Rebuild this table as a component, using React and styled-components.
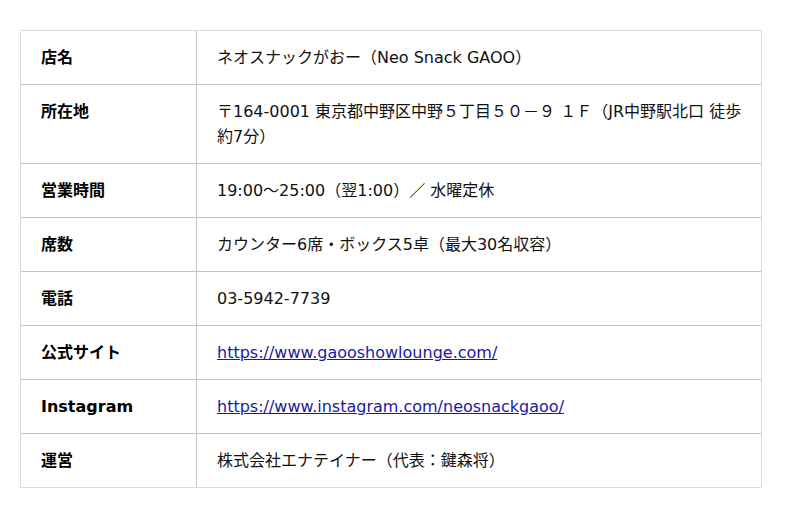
import React from "react";
import styled, { createGlobalStyle } from "styled-components";

const rows = [
  { label: "店名", value: "ネオスナックがおー（Neo Snack GAOO）" },
  {
    label: "所在地",
    value: "〒164-0001 東京都中野区中野５丁目５０－９ １Ｆ（JR中野駅北口 徒歩約7分）",
  },
  { label: "営業時間", value: "19:00〜25:00（翌1:00）／ 水曜定休" },
  { label: "席数", value: "カウンター6席・ボックス5卓（最大30名収容）" },
  { label: "電話", value: "03-5942-7739" },
  {
    label: "公式サイト",
    href: "https://www.gaooshowlounge.com/",
  },
  {
    label: "Instagram",
    href: "https://www.instagram.com/neosnackgaoo/",
  },
  { label: "運営", value: "株式会社エナテイナー（代表：鍵森将）" },
];

const App = () => {
  return (
    <Page>
      <GlobalStyle />
      <InfoTable>
        {rows.map((row, i) => (
          <Row key={row.label} last={i === rows.length - 1}>
            <Label>{row.label}</Label>
            <Value>
              {row.href ? <Link href={row.href}>{row.href}</Link> : row.value}
            </Value>
          </Row>
        ))}
      </InfoTable>
    </Page>
  );
};

export default App;

const GlobalStyle = createGlobalStyle`
  body {
    margin: 0;
    background: #fff;
    font-family: "DejaVu Sans", "Noto Sans CJK JP", sans-serif;
    color: #111;
  }
`;

const Page = styled.div`
  padding: 30px 38px 30px 20px;
`;

const InfoTable = styled.div`
  width: 742px;
  box-sizing: border-box;
  border: 1px solid #dcdcdc;
  display: flex;
  flex-direction: column;
`;

const Row = styled.div`
  display: grid;
  grid-template-columns: 176px 1fr;
  border-bottom: ${(p) => (p.last ? "none" : "1px solid #c4c4c4")};
`;

const Cell = styled.div`
  padding: 14px 20px;
  font-size: 16px;
  line-height: 25px;
`;

const Label = styled(Cell)`
  font-weight: bold;
  border-right: 1px solid #c4c4c4;
  color: #000;
`;

const Value = styled(Cell)`
  padding-right: 14px;
  color: #111;
`;

const Link = styled.a`
  color: #1a1aa0;
  text-decoration: underline;
`;
